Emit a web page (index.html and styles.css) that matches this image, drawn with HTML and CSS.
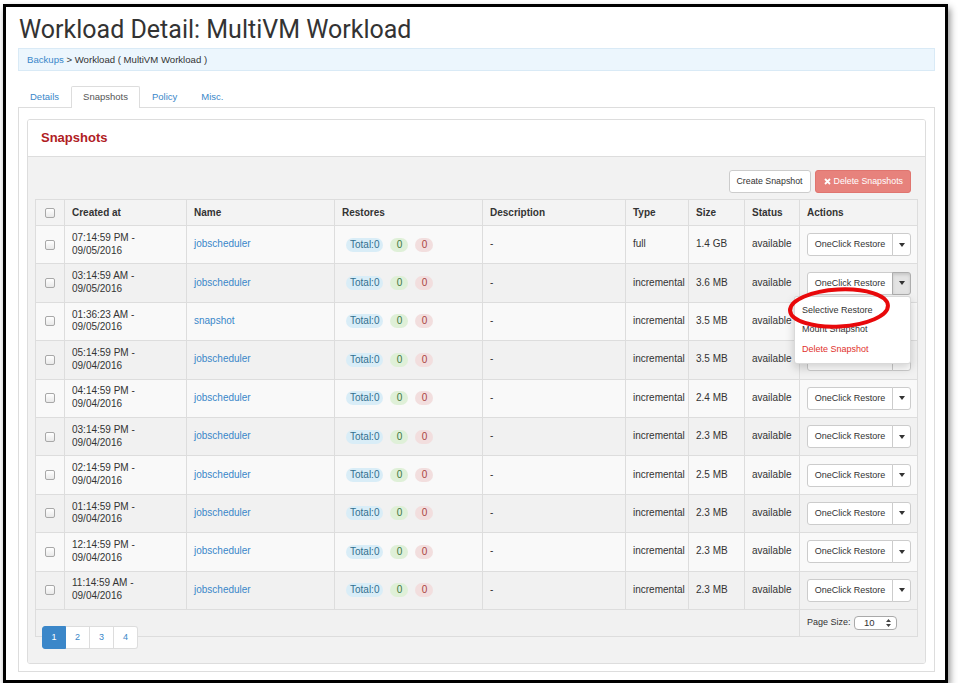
FILE: index.html
```html
<!DOCTYPE html>
<html>
<head>
<meta charset="utf-8">
<link rel="stylesheet" href="styles.css">
</head>
<body>
<div class="frame">
  <h1 class="title">Workload Detail: MultiVM Workload</h1>
  <div class="crumb"><a class="lnk">Backups</a> &gt; Workload ( MultiVM Workload )</div>
  <ul class="tabs">
    <li class="tab">Details</li>
    <li class="tab active">Snapshots</li>
    <li class="tab">Policy</li>
    <li class="tab">Misc.</li>
  </ul>
  <div class="tabcontent">
    <div class="panel">
      <div class="panel-head">Snapshots</div>
      <div class="panel-body">
        <div class="toolbar">
          <span class="btn">Create Snapshot</span>
          <span class="btn danger"><svg width="7" height="7" viewBox="0 0 7 7"><path d="M1 1L6 6M6 1L1 6" stroke="#fff" stroke-width="1.8"/></svg> Delete Snapshots</span>
        </div>
        <table class="grid">
          <colgroup>
            <col style="width:29px"><col style="width:122px"><col style="width:148px"><col style="width:148px"><col style="width:143px"><col style="width:63px"><col style="width:56px"><col style="width:55px"><col style="width:118px">
          </colgroup>
          <thead>
            <tr><th class="c"><span class="cb"></span></th><th>Created at</th><th>Name</th><th>Restores</th><th>Description</th><th>Type</th><th>Size</th><th>Status</th><th>Actions</th></tr>
          </thead>
          <tbody>
            <tr><td class="c"><span class="cb"></span></td><td>07:14:59 PM -<br>09/05/2016</td><td><a class="lnk">jobscheduler</a></td><td><span class="bdg info">Total:0</span><span class="bdg ok">0</span><span class="bdg bad">0</span></td><td>-</td><td>full</td><td>1.4 GB</td><td>available</td><td><span class="grp"><span class="gbtn">OneClick Restore</span><span class="gcar"><i class="caret"></i></span></span></td></tr>
            <tr><td class="c"><span class="cb"></span></td><td>03:14:59 AM -<br>09/05/2016</td><td><a class="lnk">jobscheduler</a></td><td><span class="bdg info">Total:0</span><span class="bdg ok">0</span><span class="bdg bad">0</span></td><td>-</td><td>incremental</td><td>3.6 MB</td><td>available</td><td><span class="grp open"><span class="gbtn">OneClick Restore</span><span class="gcar pressed"><i class="caret"></i></span>
              <ul class="menu">
                <li>Selective Restore</li>
                <li>Mount Snapshot</li>
                <li class="red">Delete Snapshot</li>
              </ul>
              <svg class="ring" width="108" height="48" viewBox="0 0 108 48"><ellipse cx="54" cy="24" rx="49" ry="18.5" transform="rotate(-3 54 24)" fill="none" stroke="#e8090b" stroke-width="4"/></svg>
            </span></td></tr>
            <tr><td class="c"><span class="cb"></span></td><td>01:36:23 AM -<br>09/05/2016</td><td><a class="lnk">snapshot</a></td><td><span class="bdg info">Total:0</span><span class="bdg ok">0</span><span class="bdg bad">0</span></td><td>-</td><td>incremental</td><td>3.5 MB</td><td>available</td><td><span class="grp"><span class="gbtn">OneClick Restore</span><span class="gcar"><i class="caret"></i></span></span></td></tr>
            <tr><td class="c"><span class="cb"></span></td><td>05:14:59 PM -<br>09/04/2016</td><td><a class="lnk">jobscheduler</a></td><td><span class="bdg info">Total:0</span><span class="bdg ok">0</span><span class="bdg bad">0</span></td><td>-</td><td>incremental</td><td>3.5 MB</td><td>available</td><td><span class="grp"><span class="gbtn">OneClick Restore</span><span class="gcar"><i class="caret"></i></span></span></td></tr>
            <tr><td class="c"><span class="cb"></span></td><td>04:14:59 PM -<br>09/04/2016</td><td><a class="lnk">jobscheduler</a></td><td><span class="bdg info">Total:0</span><span class="bdg ok">0</span><span class="bdg bad">0</span></td><td>-</td><td>incremental</td><td>2.4 MB</td><td>available</td><td><span class="grp"><span class="gbtn">OneClick Restore</span><span class="gcar"><i class="caret"></i></span></span></td></tr>
            <tr><td class="c"><span class="cb"></span></td><td>03:14:59 PM -<br>09/04/2016</td><td><a class="lnk">jobscheduler</a></td><td><span class="bdg info">Total:0</span><span class="bdg ok">0</span><span class="bdg bad">0</span></td><td>-</td><td>incremental</td><td>2.3 MB</td><td>available</td><td><span class="grp"><span class="gbtn">OneClick Restore</span><span class="gcar"><i class="caret"></i></span></span></td></tr>
            <tr><td class="c"><span class="cb"></span></td><td>02:14:59 PM -<br>09/04/2016</td><td><a class="lnk">jobscheduler</a></td><td><span class="bdg info">Total:0</span><span class="bdg ok">0</span><span class="bdg bad">0</span></td><td>-</td><td>incremental</td><td>2.5 MB</td><td>available</td><td><span class="grp"><span class="gbtn">OneClick Restore</span><span class="gcar"><i class="caret"></i></span></span></td></tr>
            <tr><td class="c"><span class="cb"></span></td><td>01:14:59 PM -<br>09/04/2016</td><td><a class="lnk">jobscheduler</a></td><td><span class="bdg info">Total:0</span><span class="bdg ok">0</span><span class="bdg bad">0</span></td><td>-</td><td>incremental</td><td>2.3 MB</td><td>available</td><td><span class="grp"><span class="gbtn">OneClick Restore</span><span class="gcar"><i class="caret"></i></span></span></td></tr>
            <tr><td class="c"><span class="cb"></span></td><td>12:14:59 PM -<br>09/04/2016</td><td><a class="lnk">jobscheduler</a></td><td><span class="bdg info">Total:0</span><span class="bdg ok">0</span><span class="bdg bad">0</span></td><td>-</td><td>incremental</td><td>2.3 MB</td><td>available</td><td><span class="grp"><span class="gbtn">OneClick Restore</span><span class="gcar"><i class="caret"></i></span></span></td></tr>
            <tr><td class="c"><span class="cb"></span></td><td>11:14:59 AM -<br>09/04/2016</td><td><a class="lnk">jobscheduler</a></td><td><span class="bdg info">Total:0</span><span class="bdg ok">0</span><span class="bdg bad">0</span></td><td>-</td><td>incremental</td><td>2.3 MB</td><td>available</td><td><span class="grp"><span class="gbtn">OneClick Restore</span><span class="gcar"><i class="caret"></i></span></span></td></tr>
          </tbody>
          <tfoot>
            <tr><td colspan="8"></td><td class="ps">Page Size: <span class="sel">10<svg width="5" height="8" viewBox="0 0 5 8"><path d="M2.5 0L5 3H0Z M2.5 8L5 5H0Z" fill="#444"/></svg></span></td></tr>
          </tfoot>
        </table>
        <ul class="pager">
          <li class="pg cur">1</li><li class="pg">2</li><li class="pg">3</li><li class="pg">4</li>
        </ul>
      </div>
    </div>
  </div>
</div>
</body>
</html>
```

FILE: styles.css
```css
* { box-sizing: border-box; }
html, body { margin: 0; padding: 0; background: #fff; }
body { font-family: "Liberation Sans", Arial, sans-serif; color: #333; font-size: 10px; }

.frame {
  margin: 4px 0 0 3px;
  width: 945px;
  height: 679px;
  border: 3px solid #000;
  background: #fff;
  box-shadow: 2px 4px 7px rgba(0,0,0,0.45);
  padding: 0 10px 0 12px;
}

.title {
  margin: 0;
  padding: 5px 0 0 1px;
  font-family: Roboto, "Open Sans", sans-serif;
  font-weight: 400;
  font-size: 25px;
  line-height: 36px;
  color: #333;
  letter-spacing: 0;
}

.crumb {
  margin-top: 0;
  height: 23px;
  border: 1px solid #d9eaf6;
  background: #ecf6fd;
  padding: 0 8px;
  font-size: 9.6px;
  line-height: 21px;
  color: #333;
}
.lnk { color: #3a87c9; text-decoration: none; }

.tabs {
  list-style: none;
  margin: 15px 0 0 0;
  padding: 0;
  display: flex;
  height: 21px;
}
.tab {
  padding: 0 11px;
  border: 1px solid transparent;
  border-bottom: none;
  line-height: 20px;
  font-size: 9.5px;
  color: #3a87c9;
  height: 22px;
}
.tab.active {
  color: #555;
  border-color: #ddd;
  background: #fff;
  border-radius: 2px 2px 0 0;
  position: relative;
  z-index: 1;
}

.tabcontent {
  border: 1px solid #ddd;
  height: 565px;
  padding: 11px 8px 7px 8px;
}

.panel {
  border: 1px solid #ddd;
  border-radius: 3px;
  height: 545px;
  display: flex;
  flex-direction: column;
  overflow: hidden;
}
.panel-head {
  height: 37px;
  background: #fff;
  border-bottom: 1px solid #ddd;
  padding: 0 13px;
  line-height: 36px;
  font-weight: 700;
  font-size: 13px;
  color: #b0201f;
}
.panel-body {
  flex: 1;
  background: #f2f2f2;
  padding: 13px 8px 0 7px;
}

.toolbar {
  display: flex;
  justify-content: flex-end;
  gap: 4px;
  margin-right: 6px;
  margin-bottom: 6px;
}
.btn {
  height: 23px;
  line-height: 21px;
  padding: 0 7px;
  border: 1px solid #ccc;
  border-radius: 3px;
  background: #fff;
  font-size: 8.8px;
  color: #333;
  display: inline-flex;
  align-items: center;
  gap: 3px;
}
.btn.danger {
  background: #e7827c;
  border-color: #e0756f;
  color: #fff;
  padding: 0 7px 0 8px;
}

.grid {
  width: 882px;
  table-layout: fixed;
  border-collapse: collapse;
  border: 1px solid #ddd;
  font-size: 10px;
}
.grid th, .grid td {
  border: 1px solid #ddd;
  padding: 0 7px;
  text-align: left;
  vertical-align: middle;
  white-space: nowrap;
}
.grid th {
  height: 26px;
  font-weight: 700;
  background: #f3f3f3;
}
.grid tbody td {
  height: 38.4px;
  line-height: 12.8px;
}
.grid tbody tr:nth-child(odd) td { background: #f9f9f9; }
.grid tbody tr:nth-child(even) td { background: #f1f1f1; }
.grid .c { padding: 0; text-align: center; }
.grid tfoot td { height: 27px; background: #f1f1f1; }

.cb {
  display: inline-block;
  width: 10px;
  height: 10px;
  border: 1px solid #a8a8a8;
  border-radius: 2px;
  background: linear-gradient(#fff, #e9e9e9);
  vertical-align: middle;
}

.bdg {
  display: inline-block;
  height: 14px;
  line-height: 14px;
  border-radius: 7px;
  font-size: 10px;
  margin-right: 7px;
  vertical-align: middle;
}
.bdg.info { background: #d9edf7; color: #31708f; padding: 0 4px; margin-left: 4px; }
.bdg.ok { background: #dff0d8; color: #3c763d; width: 18px; text-align: center; padding: 0; }
.bdg.bad { background: #f2dede; color: #a94442; width: 18px; text-align: center; padding: 0; }

.grp {
  display: inline-flex;
  position: relative;
  height: 23px;
  vertical-align: middle;
}
.gbtn {
  width: 86px;
  border: 1px solid #ccc;
  border-radius: 3px 0 0 3px;
  background: #fff;
  font-size: 9px;
  line-height: 21px;
  text-align: center;
}
.gcar {
  width: 19px;
  margin-left: -1px;
  border: 1px solid #ccc;
  border-radius: 0 3px 3px 0;
  background: #fff;
  display: flex;
  align-items: center;
  justify-content: center;
}
.gcar.pressed { background: #e3e3e3; border-color: #adadad; box-shadow: inset 0 2px 3px rgba(0,0,0,0.12); }
.caret {
  width: 0; height: 0;
  border-top: 4px solid #333;
  border-left: 3.5px solid transparent;
  border-right: 3.5px solid transparent;
}

.menu {
  position: absolute;
  top: 24px;
  right: 0;
  width: 117px;
  margin: 0;
  padding: 4px 0;
  list-style: none;
  background: #fff;
  border: 1px solid rgba(0,0,0,0.15);
  border-radius: 3px;
  box-shadow: 0 4px 10px rgba(0,0,0,0.18);
  z-index: 5;
}
.menu li {
  padding: 0 7px;
  height: 19.5px;
  line-height: 19.5px;
  font-size: 9px;
  color: #333;
}
.menu li.red { color: #e1312c; }
.ring {
  position: absolute;
  left: -22px;
  top: 12px;
  z-index: 6;
}

.ps { font-size: 9px; padding-left: 7px; }
.sel {
  display: inline-flex;
  align-items: center;
  justify-content: space-between;
  width: 43px;
  height: 14px;
  border: 1px solid #a9a9a9;
  border-radius: 4px;
  background: #fff;
  padding: 0 5px 0 9px;
  margin-left: 1px;
  font-size: 9.5px;
  vertical-align: middle;
}

.pager {
  list-style: none;
  margin: -11px 0 0 7px;
  padding: 0;
  display: flex;
  position: relative;
}
.pg {
  width: 24px;
  height: 23px;
  line-height: 21px;
  text-align: center;
  border: 1px solid #ddd;
  border-left: none;
  background: #fff;
  color: #3a87c9;
  font-size: 9px;
}
.pg:first-child { border-left: 1px solid #3b87c9; border-radius: 3px 0 0 3px; }
.pg:last-child { border-radius: 0 3px 3px 0; }
.pg.cur { background: #3b87c9; border-color: #3b87c9; color: #fff; }
```
